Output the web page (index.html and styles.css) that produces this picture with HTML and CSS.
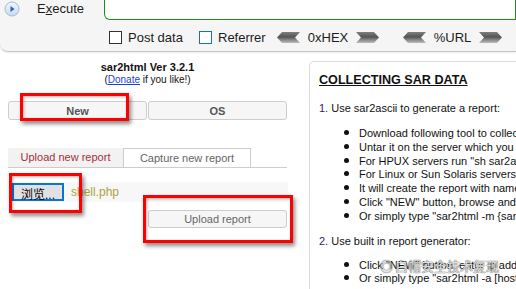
FILE: index.html
```html
<!DOCTYPE html>
<html lang="en">
<head>
  <meta charset="UTF-8">
  <title>sar2html</title>
  <link rel="stylesheet" href="styles.css">
</head>
<body>
  <!-- barra do hackbar -->
  <div class="toolbar">
    <div class="exec-row">
      <div class="exec-btn">
        <svg class="exec-icon" width="16" height="16" viewBox="0 0 16 16">
          <defs>
            <linearGradient id="execGrad" x1="0" y1="0" x2="0" y2="1">
              <stop offset="0" stop-color="#f3f7fd"/>
              <stop offset="1" stop-color="#c6d9f0"/>
            </linearGradient>
          </defs>
          <circle cx="8" cy="8" r="7" fill="url(#execGrad)" stroke="#a3bcdc"/>
          <polygon points="6.5,5 10.5,8 6.5,11" fill="#2f62ad"/>
        </svg>
        <span class="exec-label">E<u>x</u>ecute</span>
      </div>
      <div class="url-box"></div>
    </div>
    <div class="opts-row">
      <label class="opt opt-post"><span class="check"></span>Post data</label>
      <label class="opt opt-ref"><span class="check check-hover"></span>Referrer</label>
      <span class="coder">
        <svg class="chev" width="23" height="11" viewBox="0 0 23 11">
          <defs>
            <linearGradient id="chevGrad" x1="0" y1="0" x2="0" y2="1">
              <stop offset="0" stop-color="#7e7e7e"/>
              <stop offset="0.45" stop-color="#555"/>
              <stop offset="1" stop-color="#bdbdbd"/>
            </linearGradient>
          </defs>
          <polygon points="0,5.5 5,0 23,0 18,5.5 23,11 5,11" fill="url(#chevGrad)"/>
        </svg>
        <span class="coder-label hex">0xHEX</span>
        <svg class="chev" width="23" height="11" viewBox="0 0 23 11">
          <polygon points="0,0 18,0 23,5.5 18,11 0,11 5,5.5" fill="url(#chevGrad)"/>
        </svg>
      </span>
      <span class="coder coder-url">
        <svg class="chev" width="23" height="11" viewBox="0 0 23 11">
          <polygon points="0,5.5 5,0 23,0 18,5.5 23,11 5,11" fill="url(#chevGrad)"/>
        </svg>
        <span class="coder-label url">%URL</span>
        <svg class="chev" width="23" height="11" viewBox="0 0 23 11">
          <polygon points="0,0 18,0 23,5.5 18,11 0,11 5,5.5" fill="url(#chevGrad)"/>
        </svg>
      </span>
    </div>
  </div>

  <div class="page">
    <div class="side">
      <div class="app-title">sar2html Ver 3.2.1</div>
      <div class="donate">(<a href="#">Donate</a> if you like!)</div>

      <div class="btn-row">
        <button class="btn">New</button>
        <button class="btn">OS</button>
      </div>

      <div class="tabs">
        <div class="tab tab-active">Upload new report</div>
        <div class="tab">Capture new report</div>
      </div>

      <div class="file-row">
        <button class="browse">浏览...</button>
        <span class="file-name">shell.php</span>
      </div>

      <div class="upload-row">
        <button class="btn btn-upload">Upload report</button>
      </div>
    </div>

    <div class="info">
      <h1 class="info-title">COLLECTING SAR DATA</h1>

      <p class="step"><span class="num">1.</span> Use sar2ascii to generate a report:</p>
      <ul class="step-list">
        <li>Download following tool to collect sar data from servers</li>
        <li>Untar it on the server which you want to report</li>
        <li>For HPUX servers run "sh sar2ascii"</li>
        <li>For Linux or Sun Solaris servers run "sh sar2ascii"</li>
        <li>It will create the report with name sar2html-hostname-date.tar.gz</li>
        <li>Click "NEW" button, browse and select the report</li>
        <li>Or simply type "sar2html -m {sar2ascii_generated_file}"</li>
      </ul>

      <p class="step step-two"><span class="num">2.</span> Use built in report generator:</p>
      <ul class="step-list list-two">
        <li>Click "NEW" button, enter ip address, user name and password</li>
        <li>Or simply type "sar2html -a [host,user,password]"</li>
      </ul>
    </div>
  </div>

  <!-- marcações vermelhas -->
  <div class="mark mark-new"></div>
  <div class="mark mark-browse"></div>
  <div class="mark mark-upload"></div>

  <div class="watermark"><span class="wm-icon">◎</span>白帽安全技术复现</div>
</body>
</html>
```

FILE: styles.css
```css
html, body {
  overflow: hidden;
}

body {
  margin: 0;
  width: 516px;
  height: 289px;
  position: relative;
  background: #fff;
  color: #111;
  font-family: "Liberation Sans", Arial, sans-serif;
}

/* Toolbar */
.toolbar {
  height: 51px;
  background: #f5f5f5;
  border-bottom: 1px solid #c6c6c6;
  border-bottom-left-radius: 8px;
  box-shadow: 0 1px 2px rgba(0,0,0,0.08);
  font-size: 13px;
  color: #1c1c1c;
}

.exec-row {
  display: flex;
  height: 21px;
}

.exec-btn {
  width: 104px;
  display: flex;
  align-items: center;
  height: 17px;
}

.exec-icon {
  margin-left: 4px;
  margin-top: 1px;
}

.exec-label {
  margin-left: 17px;
}

.url-box {
  flex: 1;
  height: 20px;
  box-sizing: border-box;
  background: #fff;
  border: 1px solid #1e8c1e;
  border-top: none;
  border-bottom-left-radius: 6px;
}

.opts-row {
  display: flex;
  align-items: center;
  height: 27px;
  padding-top: 3px;
  padding-left: 109px;
}

.opt {
  display: flex;
  align-items: center;
}

.opt-post {
  width: 90px;
}

.opt-ref {
  width: 78px;
}

.check {
  width: 13px;
  height: 13px;
  box-sizing: border-box;
  border: 1px solid #333;
  background: #fff;
  margin-right: 6px;
}

.check-hover {
  border-color: #1a6fc4;
}

.coder {
  display: flex;
  align-items: center;
}

.coder-url {
  margin-left: 24px;
}

.coder-label {
  text-align: center;
}

.hex {
  width: 56px;
}

.url {
  width: 53px;
}

/* Página */
.page {
  display: flex;
  align-items: flex-start;
}

.side {
  width: 279px;
  flex: none;
  padding: 8px 3px 0 8px;
}

.app-title {
  text-align: center;
  font-weight: bold;
  font-size: 11px;
  line-height: 14px;
}

.donate {
  text-align: center;
  font-size: 10px;
  line-height: 12px;
}

.donate a {
  color: #1a3fd6;
}

.btn-row {
  display: flex;
  gap: 1px;
  margin-top: 15px;
}

.btn {
  width: 139px;
  height: 19px;
  padding: 0;
  background: #f6f6f6;
  border: 1px solid #cdcdcd;
  border-radius: 3px;
  font-family: "Liberation Sans", Arial, sans-serif;
  font-size: 11px;
  font-weight: bold;
  color: #555;
}

.tabs {
  display: flex;
  margin-top: 28px;
  border-bottom: 1px solid #cdcdcd;
}

.tab {
  height: 19px;
  box-sizing: border-box;
  font-size: 11px;
  line-height: 18px;
  text-align: center;
  color: #666;
  width: 128px;
  border: 1px solid #cdcdcd;
  border-bottom: none;
  background: #fff;
}

.tab-active {
  width: 115px;
  border: none;
  background: #f2f2f2;
  color: #a5303a;
}

.file-row {
  display: flex;
  align-items: center;
  height: 20px;
  margin-top: 14px;
  margin-left: 4px;
  margin-right: -1px;
  background: #f7f7f7;
}

.browse {
  width: 52px;
  height: 18px;
  padding: 0;
  box-sizing: border-box;
  border: 2px solid #0b74d3;
  background: #e1e1e1;
  font-family: "Liberation Sans", "Noto Sans CJK SC", sans-serif;
  font-size: 12px;
  color: #000;
}

.file-name {
  margin-left: 7px;
  font-size: 12px;
  color: #ada23c;
}

.upload-row {
  display: flex;
  justify-content: flex-end;
  margin-top: 8px;
}

.btn-upload {
  height: 18px;
  font-weight: normal;
  color: #666;
}

/* Painel de informação */
.info {
  width: 300px;
  height: 260px;
  flex: none;
  margin-left: 19px;
  margin-top: 9px;
  padding: 10px 0 0 9px;
  border: 1px solid #dcdcdc;
  border-top-left-radius: 5px;
  white-space: nowrap;
  overflow: hidden;
  font-size: 11px;
}

.info-title {
  margin: 0;
  font-size: 12.6px;
  line-height: 16px;
  text-decoration: underline;
}

.step {
  margin: 13px 0 0;
  line-height: 14px;
}

.num {
  color: #3a1a5e;
}

.step-list {
  margin: 12px 0 0;
  padding-left: 40px;
  line-height: 13.8px;
  list-style: none;
}

.step-list li::before {
  content: "";
  display: inline-block;
  width: 5px;
  height: 5px;
  border-radius: 50%;
  background: #111;
  margin-left: -15px;
  margin-right: 10px;
  vertical-align: 2px;
}

.step-two {
  margin-top: 10px;
}

.list-two {
  margin-top: 11px;
}

/* Marcações vermelhas */
.mark {
  position: absolute;
  box-sizing: border-box;
  border: 3px solid #f00;
  box-shadow: 2px 3px 4px rgba(0,0,0,0.45), inset 1px 1px 3px rgba(0,0,0,0.3);
}

.mark-new {
  left: 20px;
  top: 93px;
  width: 109px;
  height: 28px;
}

.mark-browse {
  left: 9px;
  top: 173px;
  width: 73px;
  height: 40px;
}

.mark-upload {
  left: 143px;
  top: 195px;
  width: 150px;
  height: 48px;
}

.watermark {
  position: absolute;
  left: 380px;
  top: 258px;
  font-family: "Noto Sans CJK SC", sans-serif;
  font-size: 13px;
  line-height: 16px;
  color: rgba(255,255,255,0.8);
  text-shadow: 0 0 1px #555, 0 0 1px #555;
}

.wm-icon {
  margin-right: 2px;
}
```
